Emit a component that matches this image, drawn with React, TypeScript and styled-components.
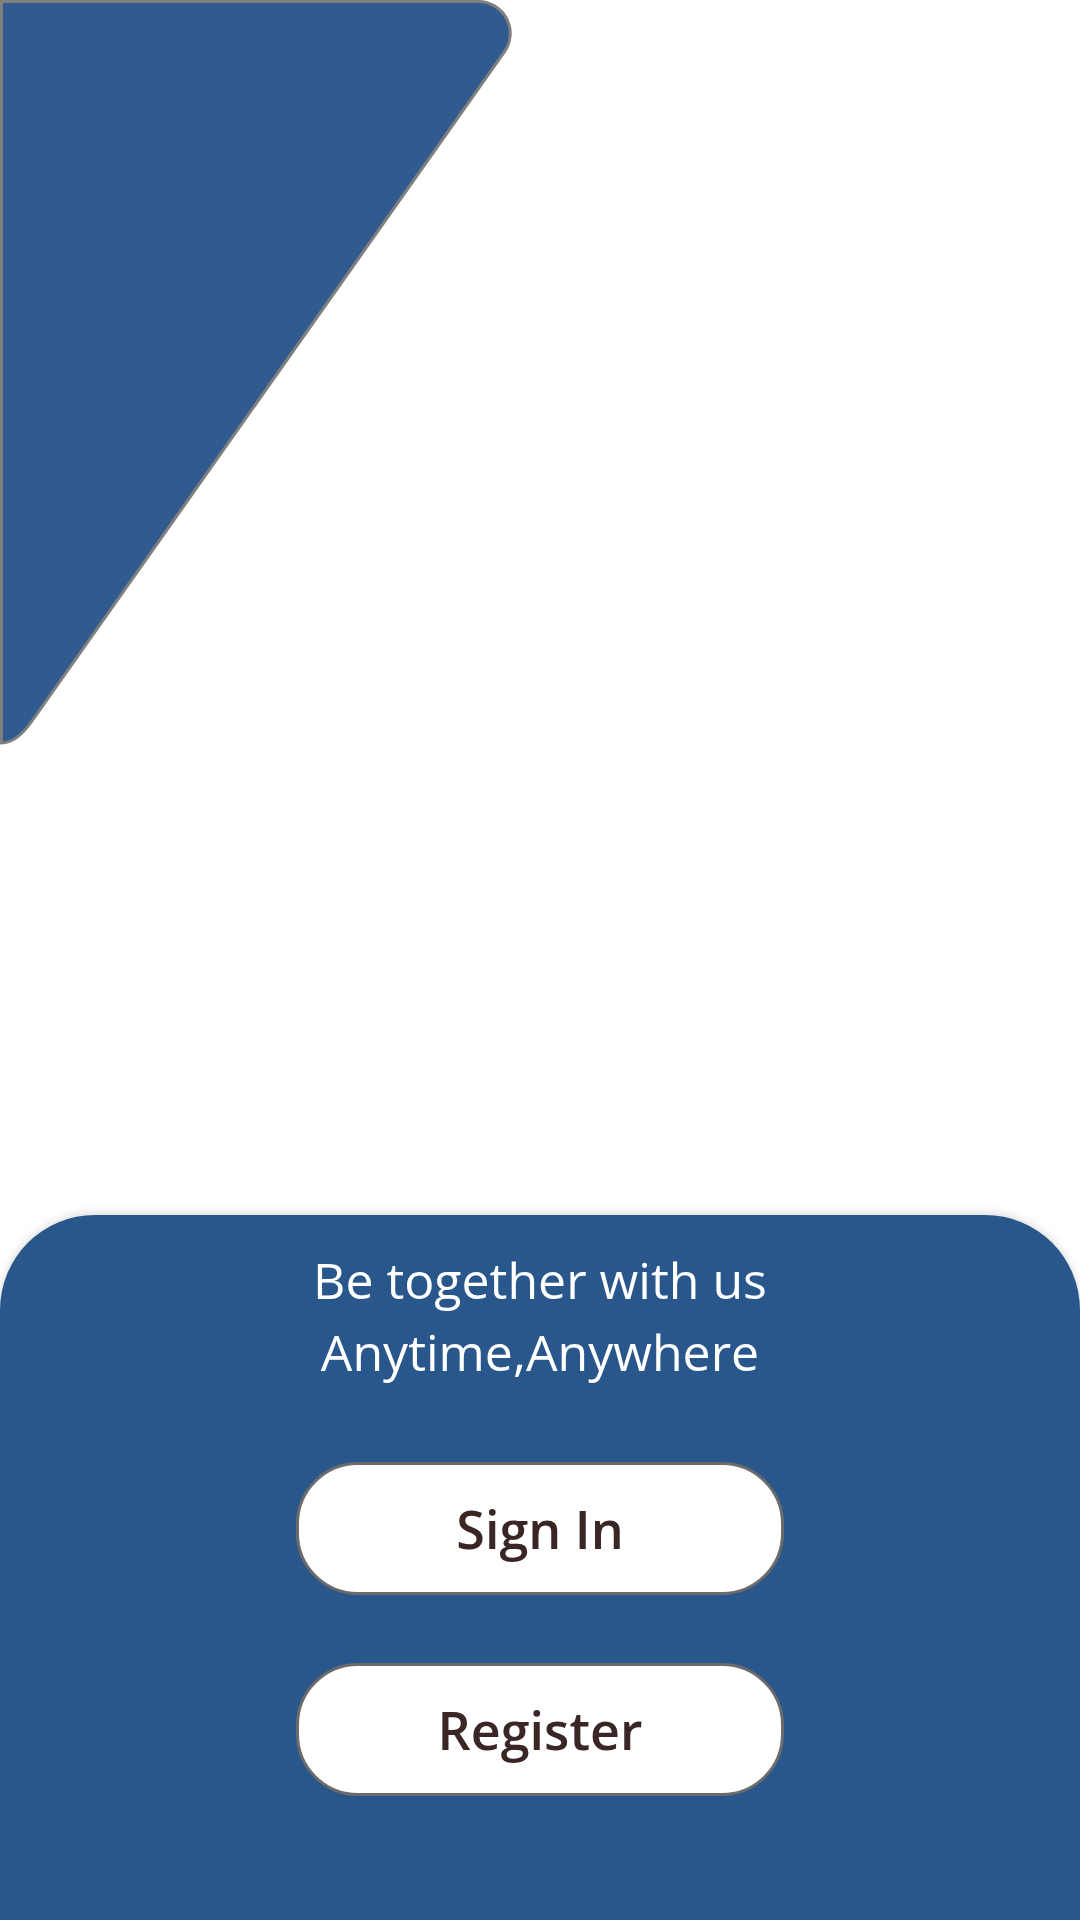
import React from 'react';
import styled, { createGlobalStyle } from 'styled-components';

const GlobalStyle = createGlobalStyle`
  html, body {
    margin: 0;
    padding: 0;
    background: #ffffff;
  }
  body {
    font-family: "Open Sans", "Noto Sans", sans-serif;
  }
`;

const Page = styled.div`
  width: 1080px;
  height: 1920px;
  display: flex;
  flex-direction: column;
  background: #ffffff;
  overflow: hidden;
`;

const Hero = styled.div`
  height: 1215px;
  flex-shrink: 0;
`;

const Shape = styled.svg`
  display: block;
`;

const Panel = styled.div`
  flex: 1;
  background: #2a578b;
  border-radius: 95px 95px 0 0;
  box-shadow: 0 -2px 10px rgba(0, 0, 0, 0.14);
  display: flex;
  flex-direction: column;
  align-items: center;
  padding-top: 29px;
`;

const Tagline = styled.p`
  margin: 0 0 74px;
  color: #ffffff;
  font-size: 50px;
  line-height: 72px;
  text-align: center;
`;

const Actions = styled.div`
  display: flex;
  flex-direction: column;
  gap: 68px;
`;

const Button = styled.button`
  width: 488px;
  height: 133px;
  box-sizing: border-box;
  background: #ffffff;
  border: 3px solid #6b6b6b;
  border-radius: 62px;
  color: #3b2626;
  font-family: "Open Sans", "Noto Sans", sans-serif;
  font-size: 52px;
  font-weight: 600;
  cursor: pointer;
  padding: 0;
`;

export default function App() {
  return (
    <Page>
      <GlobalStyle />
      <Hero>
        <Shape width="540" height="760" viewBox="0 0 540 760">
          <path
            d="M -10 1.5 L 478 1.5 A 32 32 0 0 1 504.2 52.2 L 31.3 722 Q 16.5 743 1.5 743 L 1.5 -10 Z"
            fill="#315b8e"
            stroke="#7f7f7f"
            strokeWidth="3"
          />
        </Shape>
      </Hero>
      <Panel>
        <Tagline>
          Be together with us
          <br />
          Anytime,Anywhere
        </Tagline>
        <Actions>
          <Button>Sign In</Button>
          <Button>Register</Button>
        </Actions>
      </Panel>
    </Page>
  );
}
